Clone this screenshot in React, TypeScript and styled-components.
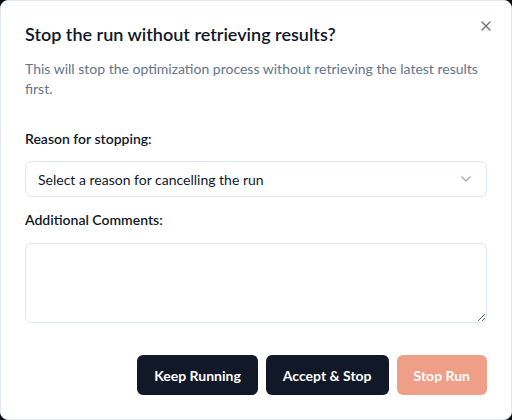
import React, { useState } from 'react';
import styled, { createGlobalStyle } from 'styled-components';
import { X, ChevronDown } from 'lucide-react';

const GlobalStyle = createGlobalStyle`
  * {
    box-sizing: border-box;
  }

  html,
  body {
    margin: 0;
    padding: 0;
    background: #0b0d12;
    font-family: 'Segoe UI', Lato, 'Noto Sans', 'Liberation Sans', sans-serif;
  }
`;

const Dialog = styled.div`
  position: relative;
  width: 512px;
  height: 420px;
  background: #ffffff;
  border: 1px solid #e2e8f0;
  border-radius: 8px;
  padding: 19px 24px 24px;
  display: flex;
  flex-direction: column;
`;

const CloseButton = styled.button`
  position: absolute;
  top: 16px;
  right: 16px;
  width: 18px;
  height: 18px;
  padding: 0;
  border: none;
  background: transparent;
  color: #4b5563;
  display: flex;
  align-items: center;
  justify-content: center;
  cursor: pointer;
  opacity: 0.8;
`;

const Header = styled.div`
  display: flex;
  flex-direction: column;
  gap: 11px;
`;

const Title = styled.h2`
  margin: 0;
  font-size: 18px;
  line-height: 28px;
  font-weight: 600;
  color: #0f172a;
`;

const Description = styled.p`
  margin: 0;
  font-size: 14px;
  line-height: 20px;
  color: #64748b;
`;

const Form = styled.div`
  display: flex;
  flex-direction: column;
  margin-top: 30px;
`;

const Field = styled.div<{ $gap?: number; $after?: number }>`
  display: flex;
  flex-direction: column;
  gap: ${p => p.$gap ?? 12}px;
  margin-bottom: ${p => p.$after ?? 0}px;
`;

const Label = styled.label`
  font-size: 14px;
  line-height: 20px;
  font-weight: 600;
  color: #0f172a;
`;

const SelectTrigger = styled.button`
  height: 36px;
  width: 100%;
  padding: 0 12px;
  border: 1px solid #e2e8f0;
  border-radius: 6px;
  background: #ffffff;
  display: flex;
  align-items: center;
  justify-content: space-between;
  font-family: inherit;
  font-size: 14px;
  color: #0f172a;
  cursor: pointer;
  text-align: left;

  svg {
    color: #64748b;
    opacity: 0.6;
  }
`;

const TextArea = styled.textarea`
  height: 80px;
  width: 100%;
  padding: 8px 12px;
  border: 1px solid #e2e8f0;
  border-radius: 6px;
  font-family: inherit;
  font-size: 14px;
  color: #0f172a;
  resize: vertical;
  outline: none;
`;

const Footer = styled.div`
  display: flex;
  justify-content: flex-end;
  gap: 8px;
  margin-top: 32px;
`;

const Button = styled.button<{ $tone?: 'dark' | 'danger' }>`
  height: 40px;
  padding: 0 17px;
  border: none;
  border-radius: 6px;
  font-family: inherit;
  font-size: 14px;
  font-weight: 700;
  color: #ffffff;
  cursor: pointer;
  background: ${p => (p.$tone === 'danger' ? '#ef9e87' : '#111827')};
`;

const App: React.FC = () => {
  const [comment, setComment] = useState('');

  return (
    <>
      <GlobalStyle />
      <Dialog>
        <CloseButton aria-label="Close">
          <X size={16} strokeWidth={2} />
        </CloseButton>

        <Header>
          <Title>Stop the run without retrieving results?</Title>
          <Description>
            This will stop the optimization process without retrieving the latest results first.
          </Description>
        </Header>

        <Form>
          <Field $after={13}>
            <Label>Reason for stopping:</Label>
            <SelectTrigger type="button">
              <span>Select a reason for cancelling the run</span>
              <ChevronDown size={16} />
            </SelectTrigger>
          </Field>
          <Field $gap={13}>
            <Label>Additional Comments:</Label>
            <TextArea value={comment} onChange={e => setComment(e.target.value)} />
          </Field>
        </Form>

        <Footer>
          <Button $tone="dark">Keep Running</Button>
          <Button $tone="dark">Accept &amp; Stop</Button>
          <Button $tone="danger" disabled>
            Stop Run
          </Button>
        </Footer>
      </Dialog>
    </>
  );
};

export default App;
